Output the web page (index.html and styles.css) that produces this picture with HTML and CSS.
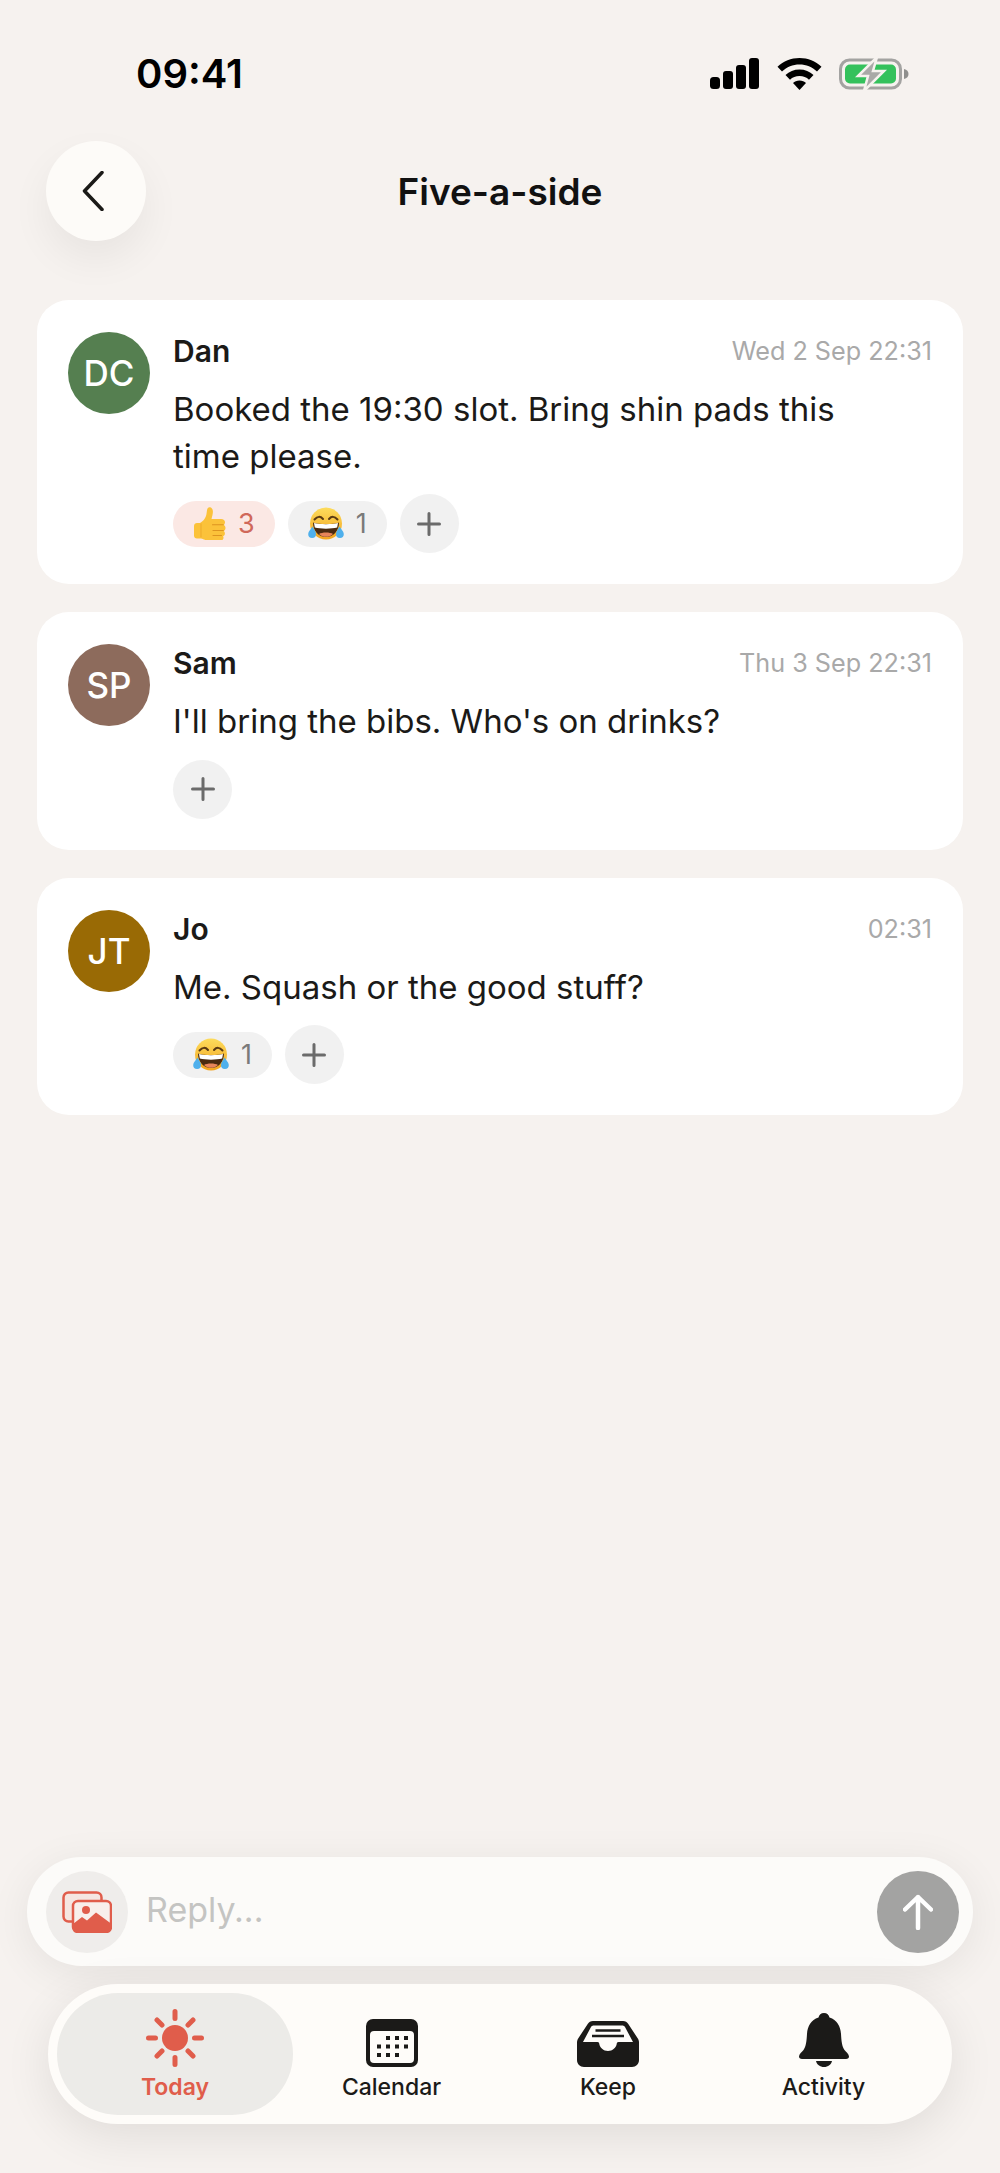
FILE: index.html

```html
<!DOCTYPE html>
<html lang="en">
<head>
  <meta charset="UTF-8">
  <meta name="viewport" content="width=device-width, initial-scale=1.0">
  <title>Five-a-side</title>
  <link rel="stylesheet" href="styles.css">
</head>
<body>
  <svg class="sprites" width="0" height="0" aria-hidden="true">
    <defs>
      <linearGradient id="faceFill" x1="0" y1="0" x2="0" y2="1">
        <stop offset="0" stop-color="#fddc5c"/>
        <stop offset="1" stop-color="#f3a41f"/>
      </linearGradient>
    </defs>
    <symbol id="plus" viewBox="0 0 24 24">
      <path d="M12 1.500v21M1.500 12h21" fill="none" stroke="#6b6b6b" stroke-width="3" stroke-linecap="round"/>
    </symbol>
    <symbol id="thumb" viewBox="0 0 33 33">
      <path d="M1 19c0-1.800 1.300-3 3-3h3c3-1.800 5-4 6-7 .7-2 .7-4.500 1.100-6.300C14.400 1 15.500 0 17 .3c2 .4 3 2.400 2.900 4.700-.1 2.500-.8 4.700-1.400 7h9.500c2.600 0 4 1.500 4 3.300 0 1.200-.5 2.100-1.200 2.700 1 .6 1.700 1.600 1.700 2.900 0 1.400-.7 2.400-1.700 3 .7.600 1.100 1.400 1.100 2.500 0 1.300-.7 2.300-1.800 2.800.3.500.4 1 .4 1.500 0 1.800-1.500 2.800-3.300 2.800H15c-3 0-4.500-1.600-7-2H4c-1.800 0-3-1.200-3-3z" fill="#fbc23a"/>
      <path d="M19.500 17.800h10.700M20 23.500h10.300M20 28.500h8.500" fill="none" stroke="#dd9420" stroke-width="1.100" stroke-linecap="round"/>
      <path d="M8 16.500v13.800" fill="none" stroke="#eea92a" stroke-width="1"/>
    </symbol>
    <symbol id="laugh" viewBox="0 0 36 33">
      <circle cx="18" cy="16.500" r="16" fill="url(#faceFill)"/>
      <path d="M6.500 12.500q4.500-5 8.500-.5M21 12q4-4.500 8.500.5" fill="none" stroke="#5b3a12" stroke-width="2" stroke-linecap="round"/>
      <path d="M5 15.500c5 2 21 2 26 0 0 8.500-5.800 14.500-13 14.500S5 24 5 15.500z" fill="#4a2a10"/>
      <path d="M6 16c5 1.600 19 1.600 24 0l-.8 4.500c-5.500 1.500-17 1.500-22.400 0z" fill="#fff"/>
      <path d="M11 27c3-2 11-2 14 0-4 3.800-10 3.800-14 0z" fill="#e8855a"/>
      <path d="M4.500 19.500c1.200 2.500 3.500 4.800 3.500 7.500a3.900 3.900 0 0 1-7.800 0c0-2.700 3-5 4.300-7.500zM31.500 19.500c-1.200 2.500-3.500 4.800-3.500 7.500a3.900 3.900 0 0 0 7.800 0c0-2.700-3-5-4.300-7.500z" fill="#4fb0ec"/>
    </symbol>
  </svg>

  <div class="screen">
    <div class="status-bar">
      <span class="clock">09:41</span>
      <div class="status-icons">
        <svg width="50" height="31" viewBox="0 0 50 31">
          <rect x="0" y="19" width="10" height="12" rx="3.500"/>
          <rect x="13" y="13" width="10" height="18" rx="3"/>
          <rect x="26" y="7" width="10" height="24" rx="3"/>
          <rect x="39" y="0" width="10" height="31" rx="3"/>
        </svg>
        <svg width="45" height="32" viewBox="0 0 45 32">
          <path d="M22.500 0C14 0 6.500 3.200 0.500 8.800l4.500 4.700C9.800 9 15.800 6.500 22.500 6.500S35.200 9 40 13.500l4.500-4.700C38.500 3.200 31 0 22.500 0z"/>
          <path d="M22.500 11.500c-5.500 0-10.300 2-14 5.600l4.500 4.600c2.500-2.400 5.800-3.700 9.500-3.700s7 1.300 9.500 3.700l4.500-4.600c-3.700-3.600-8.500-5.600-14-5.600z"/>
          <path d="M22.500 22.500c-2.700 0-5 1-6.500 2.500l6.500 7 6.500-7c-1.500-1.500-3.800-2.500-6.500-2.500z"/>
        </svg>
        <svg width="70" height="34" viewBox="0 0 70 34">
          <rect x="1.500" y="3" width="60" height="28" rx="9" fill="none" stroke="#a3a3a1" stroke-width="3"/>
          <rect x="6" y="7.500" width="51" height="19" rx="5" fill="#34c15c"/>
          <path d="M65 12c3 .5 4.500 2.500 4.500 5s-1.500 4.500-4.500 5z" fill="#8f8f8d"/>
          <path d="M38 0 19 19h10l-4 15 20-20H34z" fill="#a9a9a7" stroke="#f6f2ef" stroke-width="2.500"/>
        </svg>
      </div>
    </div>

    <header class="top-bar">
      <button class="back-btn" aria-label="Back">
        <svg width="22" height="40" viewBox="0 0 22 40">
          <path d="M20 1.500 2.500 20 20 38.500" fill="none" stroke="#1b1a18" stroke-width="3.500" stroke-linecap="round" stroke-linejoin="round"/>
        </svg>
      </button>
      <h1 class="page-title">Five-a-side</h1>
    </header>

    <main class="thread">
      <article class="msg">
        <div class="avatar avatar-green">DC</div>
        <div class="msg-body">
          <div class="msg-head"><span class="msg-name">Dan</span><time class="msg-time">Wed 2 Sep 22:31</time></div>
          <p class="msg-text">Booked the 19:30 slot. Bring shin pads this time please.</p>
          <div class="reactions">
            <span class="chip chip-mine"><svg class="emoji"><use href="#thumb"/></svg>3</span>
            <span class="chip"><svg class="emoji emoji-wide"><use href="#laugh"/></svg>1</span>
            <button class="add-btn" aria-label="Add reaction"><svg width="24" height="24"><use href="#plus"/></svg></button>
          </div>
        </div>
      </article>

      <article class="msg">
        <div class="avatar avatar-brown">SP</div>
        <div class="msg-body">
          <div class="msg-head"><span class="msg-name">Sam</span><time class="msg-time">Thu 3 Sep 22:31</time></div>
          <p class="msg-text">I'll bring the bibs. Who's on drinks?</p>
          <div class="reactions">
            <button class="add-btn" aria-label="Add reaction"><svg width="24" height="24"><use href="#plus"/></svg></button>
          </div>
        </div>
      </article>

      <article class="msg">
        <div class="avatar avatar-ochre">JT</div>
        <div class="msg-body">
          <div class="msg-head"><span class="msg-name">Jo</span><time class="msg-time">02:31</time></div>
          <p class="msg-text">Me. Squash or the good stuff?</p>
          <div class="reactions">
            <span class="chip"><svg class="emoji emoji-wide"><use href="#laugh"/></svg>1</span>
            <button class="add-btn" aria-label="Add reaction"><svg width="24" height="24"><use href="#plus"/></svg></button>
          </div>
        </div>
      </article>
    </main>

    <div class="composer">
      <button class="round-btn attach-btn" aria-label="Add photo">
        <svg width="50" height="42" viewBox="0 0 50 42">
          <rect x="1.500" y="1.500" width="38" height="29" rx="5" fill="#f5e6e1" stroke="#e05d4b" stroke-width="2.500"/>
          <rect x="11" y="10" width="38" height="31" rx="5" fill="#f8efeb" stroke="#e05d4b" stroke-width="2.500"/>
          <path d="M11 33l9-7 5 3.500 9-8 15 11V36a5 5 0 0 1-5 5H16a5 5 0 0 1-5-5z" fill="#e05d4b"/>
          <circle cx="24" cy="19" r="4" fill="#e05d4b"/>
        </svg>
      </button>
      <span class="reply-hint">Reply...</span>
      <button class="round-btn send-btn" aria-label="Send">
        <svg width="30" height="36" viewBox="0 0 30 36">
          <path d="M15 34V3M2 15.500 15 3l13 12.500" fill="none" stroke="#fff" stroke-width="4.500" stroke-linecap="round" stroke-linejoin="round"/>
        </svg>
      </button>
    </div>

    <nav class="tabbar">
      <a class="tab tab-active">
        <svg class="tab-icon" width="58" height="58" viewBox="0 0 58 58">
          <circle cx="29" cy="29" r="13" fill="#e05d4b"/>
          <path d="M29 2.500v7M29 48.500v7M2.500 29h7M48.500 29h7M11 11l5 5M42 42l5 5M11 47l5-5M42 16l5-5" stroke="#e05d4b" stroke-width="5" stroke-linecap="round"/>
        </svg>
        <span>Today</span>
      </a>
      <a class="tab">
        <svg class="tab-icon" width="52" height="48" viewBox="0 0 52 48">
          <rect width="52" height="48" rx="7" fill="#1b1a18"/>
          <rect x="4" y="12" width="44" height="32" rx="4" fill="#fefcf9"/>
          <g fill="#1b1a18">
            <rect x="20" y="17" width="4" height="4"/><rect x="29" y="17" width="4" height="4"/><rect x="38" y="17" width="4" height="4"/>
            <rect x="11" y="25.500" width="4" height="4"/><rect x="20" y="25.500" width="4" height="4"/><rect x="29" y="25.500" width="4" height="4"/><rect x="38" y="25.500" width="4" height="4"/>
            <rect x="11" y="34" width="4" height="4"/><rect x="20" y="34" width="4" height="4"/><rect x="29" y="34" width="4" height="4"/>
          </g>
        </svg>
        <span>Calendar</span>
      </a>
      <a class="tab">
        <svg class="tab-icon" width="62" height="46" viewBox="0 0 62 46">
          <path d="M16 0h30c2.500 0 4 1 5.300 3L60.500 17c1 1.500 1.500 2.800 1.500 4.500V39c0 4-3 7-7 7H7c-4 0-7-3-7-7V21.500C0 19.800.5 18.500 1.500 17L10.700 3C12 1 13.500 0 16 0z" fill="#1b1a18"/>
          <path d="M17 4.500h28c1.500 0 2.300.5 3 1.500l8 15H41.500c-1.200 0-1.700.8-1.800 2-.4 3.500-4.200 7-8.700 7s-8.300-3.500-8.700-7c-.1-1.200-.6-2-1.800-2H6l8-15c.7-1 1.500-1.500 3-1.500z" fill="#fefcf9"/>
          <path d="M18.500 9.500h25M15 15h32" stroke="#1b1a18" stroke-width="2.500"/>
        </svg>
        <span>Keep</span>
      </a>
      <a class="tab">
        <svg class="tab-icon" width="50" height="54" viewBox="0 0 50 54">
          <path d="M25 0c3 0 5 2 5.500 4.500C38 7 41.500 13 42 21c.4 7 1 12.500 3.500 16 1.500 2 4.500 4 4.500 6.500 0 1.500-1 2.500-3 2.500H3c-2 0-3-1-3-2.500C0 41 3 39 4.500 37 7 33.500 7.600 28 8 21c.5-8 4-14 11.500-16.500C20 2 22 0 25 0z" fill="#1b1a18"/>
          <path d="M17 48h16c-.7 3.500-4 6-8 6s-7.300-2.500-8-6z" fill="#1b1a18"/>
        </svg>
        <span>Activity</span>
      </a>
    </nav>
  </div>
</body>
</html>
```

FILE: styles.css

```css
* {
  box-sizing: border-box;
}

body {
  margin: 0;
  background-color: #f6f2ef;
  color: #1b1a18;
  font-family: Inter, "Liberation Sans", sans-serif;
}

button {
  border: none;
  padding: 0;
  font: inherit;
}

.sprites {
  position: absolute;
}

.screen {
  display: flex;
  flex-direction: column;
  width: 1000px;
  height: 2173px;
  padding-bottom: 49px;
}

/* status bar */

.status-bar {
  display: flex;
  align-items: center;
  justify-content: space-between;
  height: 33px;
  margin-top: 57px;
  padding: 0 91px 0 136px;
}

.clock {
  font-size: 40px;
  font-weight: 600;
  color: #000;
}

.status-icons {
  display: flex;
  align-items: center;
  gap: 17px;
}

/* header */

.top-bar {
  position: relative;
  display: flex;
  align-items: center;
  justify-content: center;
  height: 100px;
  margin-top: 51px;
}

.back-btn {
  position: absolute;
  left: 46px;
  top: 0;
  display: flex;
  align-items: center;
  justify-content: center;
  width: 100px;
  height: 100px;
  padding-right: 6px;
  border-radius: 50%;
  background-color: #fdfbf8;
  box-shadow: 0 18px 40px rgba(0, 0, 0, 0.06);
}

.page-title {
  margin: 0;
  font-size: 37px;
  font-weight: 600;
  color: #111;
}

/* messages */

.thread {
  display: flex;
  flex-direction: column;
  gap: 28px;
  margin-top: 59px;
  padding: 0 37px;
}

.msg {
  display: flex;
  gap: 23px;
  padding: 31px;
  border-radius: 32px;
  background-color: #fff;
}

.avatar {
  display: flex;
  flex: none;
  align-items: center;
  justify-content: center;
  width: 82px;
  height: 82px;
  margin-top: 1px;
  border-radius: 50%;
  color: #fff;
  font-size: 35px;
  font-weight: 500;
}

.avatar-green { background-color: #557f50; }
.avatar-brown { background-color: #8d6b5c; }
.avatar-ochre { background-color: #996a05; }

.msg-body {
  flex: 1;
  min-width: 0;
}

.msg-head {
  display: flex;
  align-items: center;
  justify-content: space-between;
  height: 42px;
  padding-bottom: 2px;
}

.msg-name {
  font-size: 30px;
  font-weight: 600;
}

.msg-time {
  color: #a9a9a9;
  font-size: 25.200px;
}

.msg-text {
  margin: 13px 0 15px;
  padding-right: 60px;
  font-size: 33px;
  line-height: 46.500px;
}

.reactions {
  display: flex;
  align-items: center;
  gap: 13px;
  height: 59px;
}

.chip {
  display: flex;
  align-items: center;
  gap: 12px;
  height: 46px;
  padding: 0 20px;
  border-radius: 23px;
  background-color: #f1f1f1;
  color: #7a7a7a;
  font-size: 27px;
}

.chip-mine {
  background-color: #fbe8e4;
  color: #d0685a;
}

.emoji {
  width: 33px;
  height: 33px;
}

.emoji-wide {
  width: 36px;
}

.add-btn {
  display: flex;
  align-items: center;
  justify-content: center;
  width: 59px;
  height: 59px;
  border-radius: 50%;
  background-color: #f1f1f1;
}

/* composer + tabs */

.composer {
  display: flex;
  align-items: center;
  height: 109px;
  margin: auto 27px 0;
  padding: 0 14px 0 19px;
  border-radius: 55px;
  background-color: #fcfbf9;
  box-shadow: 0 8px 44px rgba(0, 0, 0, 0.07);
}

.round-btn {
  display: flex;
  flex: none;
  align-items: center;
  justify-content: center;
  width: 82px;
  height: 82px;
  border-radius: 50%;
}

.attach-btn {
  background-color: #efedeb;
}

.send-btn {
  background-color: #a3a3a2;
}

.reply-hint {
  flex: 1;
  padding: 0 0 4px 18px;
  color: #c4c4c2;
  font-size: 34px;
}

.tabbar {
  display: grid;
  grid-template-columns: 236px 197px 236px 195px;
  height: 140px;
  margin: 18px 48px 0;
  padding: 9px;
  border-radius: 70px;
  background-color: #fefcf9;
  box-shadow: 0 12px 48px rgba(0, 0, 0, 0.09);
}

.tab {
  display: flex;
  flex-direction: column;
  align-items: center;
  justify-content: flex-end;
  padding-bottom: 14px;
  border-radius: 61px;
  font-size: 23px;
  font-weight: 500;
}

.tab-icon {
  margin-bottom: 6px;
}

.tab-active {
  background-color: #ecebe8;
  color: #e05d4b;
  font-weight: 600;
}
```
